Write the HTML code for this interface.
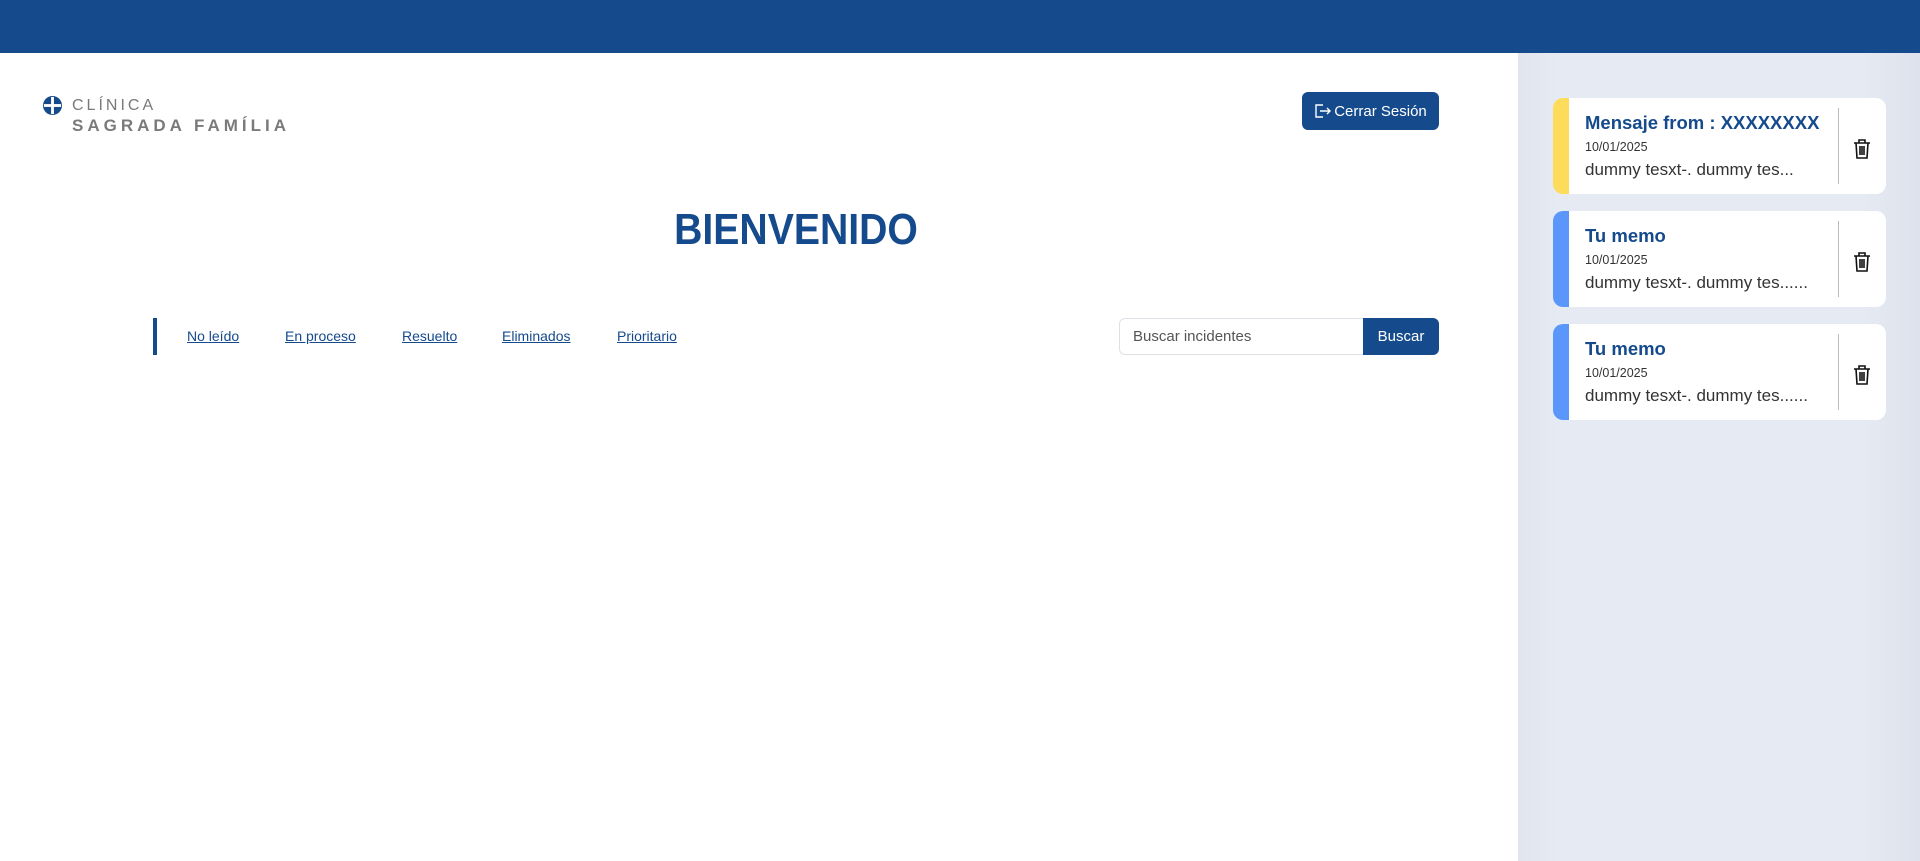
<!DOCTYPE html>
<html><head><meta charset="utf-8"><style>
*{box-sizing:border-box;margin:0;padding:0}
body{width:1920px;height:861px;overflow:hidden;background:#fff;font-family:"Liberation Sans",sans-serif;position:relative}
.top{position:absolute;left:0;top:0;width:1920px;height:53px;background:#154a8c}
.side{position:absolute;left:1518px;top:53px;width:402px;height:808px;background:linear-gradient(90deg,#e0e5ee 0,#e6eaf3 10%,#e6eaf3 85%,#dde2ec 100%)}
.logo{position:absolute;left:43px;top:96px}
.c1{position:absolute;left:72px;top:97px;font-size:16px;letter-spacing:3px;color:#7a7a7a}
.c2{position:absolute;left:72px;top:116px;font-size:17px;font-weight:bold;letter-spacing:4px;color:#7a7a7a}
.btn{position:absolute;left:1302px;top:92px;width:137px;height:38px;background:#154a8c;border-radius:6px;color:#fff;font-size:15px;display:flex;align-items:center;justify-content:center;gap:2px}
h1{position:absolute;left:0;width:1592px;top:205px;text-align:center;font-size:44px;color:#154a8c;font-weight:bold;transform:scaleX(.89)}
.bar{position:absolute;left:153px;top:318px;width:4px;height:37px;background:#154a8c}
.tab{position:absolute;top:328px;font-size:14px;color:#154a8c;text-decoration:underline}
.inp{position:absolute;left:1119px;top:318px;width:245px;height:37px;border:1px solid #dde1e6;border-radius:6px 0 0 6px;font-size:15px;color:#555;padding:9px 13px}
.sb{position:absolute;left:1363px;top:318px;width:76px;height:37px;background:#154a8c;border-radius:0 6px 6px 0;color:#fff;font-size:15px;display:flex;align-items:center;justify-content:center}
.card{position:absolute;left:1553px;width:333px;height:96px;background:#fff;border-radius:10px;overflow:hidden}
.card .s{position:absolute;left:0;top:0;width:16px;height:100%}
.card .t{position:absolute;left:32px;top:14px;font-size:18.5px;font-weight:bold;color:#154a8c}
.card .d{position:absolute;left:32px;top:42px;font-size:12.5px;color:#333}
.card .b{position:absolute;left:32px;top:62px;font-size:17px;color:#333}
.card .v{position:absolute;left:285px;top:10px;width:1px;height:76px;background:#bbb}
.card svg.tr{position:absolute;left:299px;top:40px}
</style></head><body>
<div class="top"></div>
<svg class="logo" width="19" height="19" viewBox="0 0 20 20"><circle cx="10" cy="10" r="10" fill="#154a8c"/><rect x="8.5" y="1" width="3" height="18" fill="#fff"/><rect x="1" y="8.5" width="18" height="3" fill="#fff"/></svg>
<div class="c1">CLÍNICA</div>
<div class="c2">SAGRADA FAMÍLIA</div>
<div class="btn"><svg width="18" height="16" viewBox="0 0 18 16" fill="none" stroke="#fff" stroke-width="1.4"><path d="M9 2H2v12h7M6 8h10M13 5l3 3-3 3"/></svg>Cerrar Sesión</div>
<h1>BIENVENIDO</h1>
<div class="bar"></div>
<a class="tab" style="left:187px">No leído</a>
<a class="tab" style="left:285px">En proceso</a>
<a class="tab" style="left:402px">Resuelto</a>
<a class="tab" style="left:502px">Eliminados</a>
<a class="tab" style="left:617px">Prioritario</a>
<div class="inp">Buscar incidentes</div>
<div class="sb">Buscar</div>
<div class="side"></div>
<div class="card" style="top:98px"><div class="s" style="background:#fddb5b"></div><div class="t">Mensaje from : XXXXXXXX</div><div class="d">10/01/2025</div><div class="b">dummy tesxt-. dummy tes...</div><div class="v"></div><svg class="tr" width="20" height="22" viewBox="0 0 20 22" fill="none" stroke="#111" stroke-width="1.6"><path d="M2 5h16M7 5V2h6v3M4 5l1 15h10l1-15M8 8v9M10 8v9M12 8v9"/></svg></div>
<div class="card" style="top:211px"><div class="s" style="background:#5b97fa"></div><div class="t">Tu memo</div><div class="d">10/01/2025</div><div class="b">dummy tesxt-. dummy tes......</div><div class="v"></div><svg class="tr" width="20" height="22" viewBox="0 0 20 22" fill="none" stroke="#111" stroke-width="1.6"><path d="M2 5h16M7 5V2h6v3M4 5l1 15h10l1-15M8 8v9M10 8v9M12 8v9"/></svg></div>
<div class="card" style="top:324px"><div class="s" style="background:#5b97fa"></div><div class="t">Tu memo</div><div class="d">10/01/2025</div><div class="b">dummy tesxt-. dummy tes......</div><div class="v"></div><svg class="tr" width="20" height="22" viewBox="0 0 20 22" fill="none" stroke="#111" stroke-width="1.6"><path d="M2 5h16M7 5V2h6v3M4 5l1 15h10l1-15M8 8v9M10 8v9M12 8v9"/></svg></div>
</body></html>
